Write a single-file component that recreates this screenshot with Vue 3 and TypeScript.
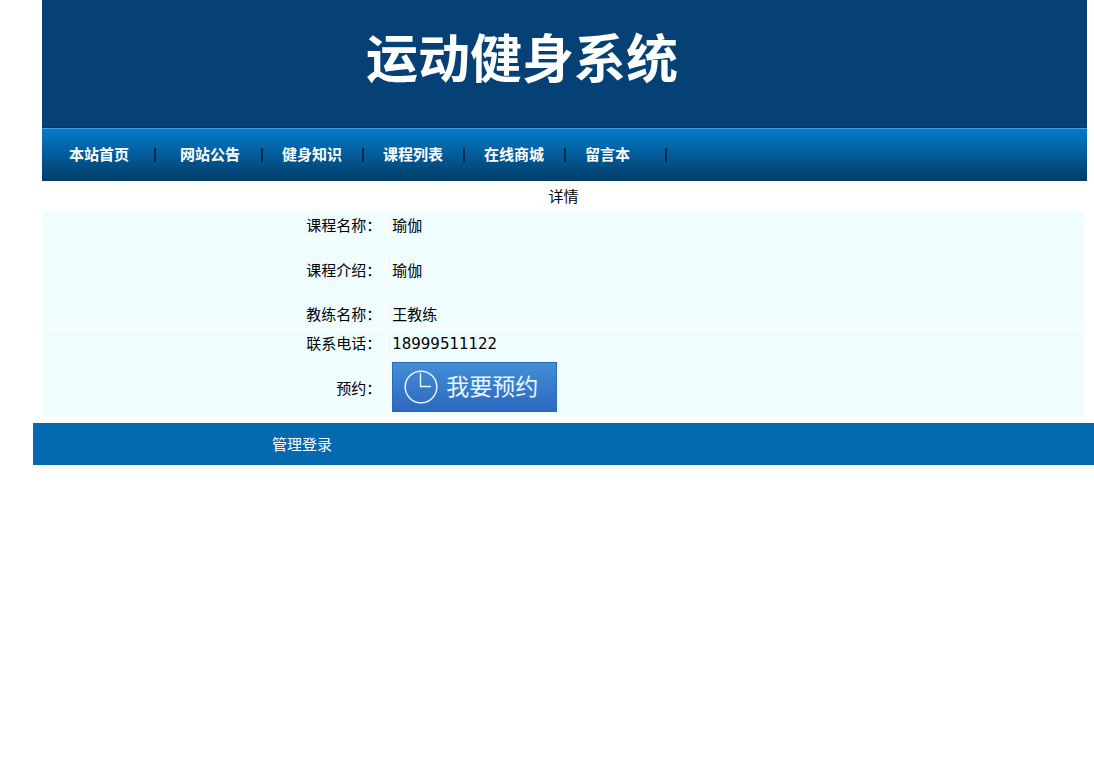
<script setup lang="ts">
interface Detail {
  label: string
  value: string
  tall?: boolean
}

const navItems: string[] = ['本站首页', '网站公告', '健身知识', '课程列表', '在线商城', '留言本']

const details: Detail[] = [
  { label: '课程名称', value: '瑜伽' },
  { label: '课程介绍', value: '瑜伽', tall: true },
  { label: '教练名称', value: '王教练' },
  { label: '联系电话', value: '18999511122' },
]
</script>

<template>
  <div class="page">
    <div class="content">
      <header class="banner">
        <h1>运动健身系统</h1>
      </header>
      <nav class="nav">
        <a v-for="item in navItems" :key="item" href="#" class="nav-item">{{ item }}</a>
      </nav>
      <div class="panel">
        <table class="details">
          <caption>详情</caption>
          <tbody>
            <tr v-for="row in details" :key="row.label" :class="{ tall: row.tall }">
              <th scope="row">{{ row.label }}：</th>
              <td>{{ row.value }}</td>
            </tr>
            <tr class="tall">
              <th scope="row">预约：</th>
              <td class="action">
                <button type="button" class="book">
                  <svg width="34" height="34" viewBox="0 0 34 34" fill="none" stroke="currentColor" aria-hidden="true">
                    <circle cx="17" cy="17" r="15.8" stroke-width="1.5" />
                    <path d="M16.5 3V16.5H27" stroke-width="1.4" />
                  </svg>
                  <span>我要预约</span>
                </button>
              </td>
            </tr>
          </tbody>
        </table>
      </div>
    </div>
    <footer class="footer">
      <a href="#">管理登录</a>
    </footer>
  </div>
</template>

<style>
body {
  margin: 0;
  background: #fff;
}
</style>

<style scoped>
.page {
  padding-left: 33px;
  font-family: "DejaVu Sans", "Noto Sans CJK SC", sans-serif;
  font-size: 15px;
  line-height: 20px;
  color: #000;
}

.content {
  margin: 0 7px 5px 9px;
}

.banner {
  box-sizing: border-box;
  height: 128px;
  padding-left: 324px;
  background: #054175;
  border-bottom: 1px solid #053461;
}

h1 {
  margin: 0;
  font-family: "Noto Sans CJK SC", sans-serif;
  font-size: 52px;
  font-weight: 700;
  line-height: 112px;
  color: #fff;
  white-space: nowrap;
}

.nav {
  box-sizing: border-box;
  display: flex;
  align-items: center;
  height: 53px;
  border-top: 1px solid #4a9bd6;
  background: linear-gradient(#027bcb, #023c67);
}

.nav-item {
  box-sizing: border-box;
  width: 101px;
  padding-left: 19px;
  border-right: 2px solid #03294a;
  font-weight: 700;
  line-height: 14px;
  color: #fff;
  text-decoration: none;
  white-space: nowrap;
}

.nav-item:first-child {
  width: 114px;
  padding-left: 27px;
}

.nav-item:nth-child(2) {
  width: 107px;
  padding-left: 24px;
}

.panel {
  padding-right: 2px;
}

.details {
  width: 100%;
  border-spacing: 1px;
}

caption {
  padding: 6px 0 3px;
}

th,
td {
  box-sizing: border-box;
  height: 28px;
  padding: 5px 5px 3px;
  background: #f0fdff;
  font-weight: 400;
  text-align: left;
}

th {
  width: 33%;
  text-align: right;
}

.tall th,
.tall td {
  height: 59px;
}

.details .action {
  padding: 3px 5px 5px;
}

.book {
  box-sizing: border-box;
  display: flex;
  align-items: center;
  gap: 8px;
  width: 165px;
  height: 50px;
  padding: 0 0 0 11px;
  border: 1px solid #2c68b5;
  background: linear-gradient(#438ed6, #2c68c0);
  color: #e8f6ff;
  font-family: "Noto Sans CJK SC", sans-serif;
  font-size: 23px;
  font-weight: 400;
  line-height: 30px;
  white-space: nowrap;
  cursor: pointer;
}

.book span {
  padding-bottom: 3px;
}

.footer {
  padding: 12px 0 10px 239px;
  background: #046ab0;
}

.footer a {
  color: #fff;
  text-decoration: none;
}
</style>
